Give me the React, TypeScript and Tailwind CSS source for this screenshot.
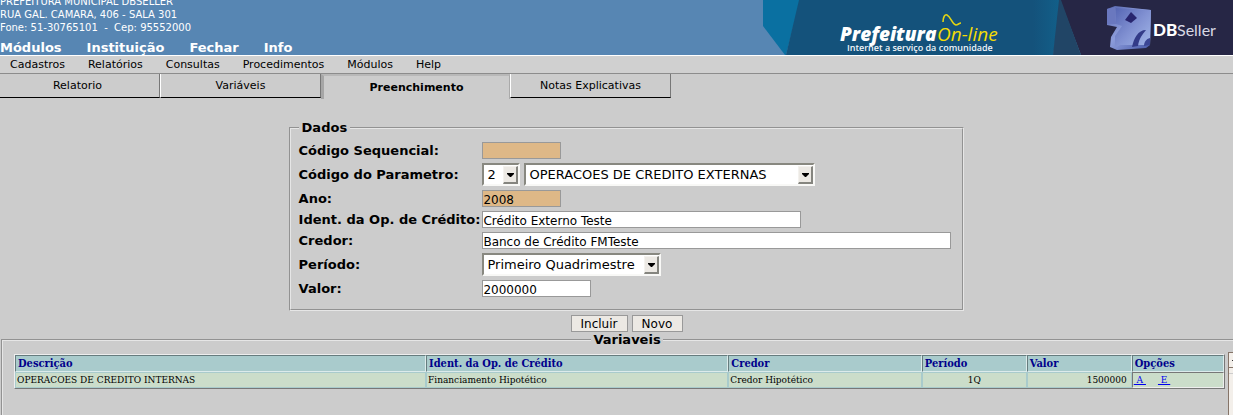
import type { ReactNode } from "react";

const mainMenu = ["Módulos", "Instituição", "Fechar", "Info"];
const subMenu = ["Cadastros", "Relatórios", "Consultas", "Procedimentos", "Módulos", "Help"];

function Banner() {
  return (
    <svg className="block h-[55px] w-[470px] shrink-0" viewBox="0 0 470 55" role="img" aria-label="Prefeitura On-line - DBSeller">
      <defs>
        <linearGradient id="cube" x1="0" y1="0" x2="1" y2="1">
          <stop offset="0" stopColor="#5362ac" />
          <stop offset="0.45" stopColor="#8d9ddb" />
          <stop offset="1" stopColor="#4658a8" />
        </linearGradient>
        <linearGradient id="face" x1="0" y1="0" x2="1" y2="1">
          <stop offset="0" stopColor="#5666b4" />
          <stop offset="0.5" stopColor="#8191d2" />
          <stop offset="1" stopColor="#a4b9ea" />
        </linearGradient>
        <linearGradient id="teal" x1="0" y1="0" x2="1" y2="0">
          <stop offset="0" stopColor="#14527b" />
          <stop offset="1" stopColor="#12608a" />
        </linearGradient>
      </defs>
      <path d="M0 0H37L23 55H22L0 26Z" fill="#0a70a1" />
      <path d="M36 0H298L290 55H23Z" fill="#14527b" />
      <path d="M270 0H298L290 55H270Z" fill="url(#teal)" />
      <path d="M297 0H470V55H318Z" fill="#262645" />
      <path d="M298 0L318 55H290L296 0Z" fill="#214566" />
      <path d="M344 9L352 6L388 10L387 45L383 48L354 50L347 47L348 37L354 27L344 25Z" fill="url(#cube)" />
      <path d="M353 8L388 10L387 45H357L352 48L352 36L359 26L353 24Z" fill="url(#face)" />
      <path d="M344 9L352 7L353 24H344Z" fill="#6a78bf" />
      <path d="M368 12L374 18L368 23L362 20Z" fill="#28256e" />
      <path d="M369 47C371 38 375 30 383 30C380 34 376 38 375 46Z" fill="#333b88" />
      <path d="M381 46C381 42 383 39 387 38V45Z" fill="#3b4694" />
      <text x="77" y="41" fill="#fff" fontFamily="Open Sans" fontSize="19" fontWeight="800" fontStyle="italic">Prefeitura</text>
      <text x="174" y="41" fill="#f5dc05" fontFamily="Open Sans" fontSize="19" fontStyle="italic">On-line</text>
      <path d="M180 22C180 17 182 14 184 15C188 17 189 24 193 25C195 25 196 23 198 23" fill="none" stroke="#e3d413" strokeWidth="1.6" />
      <text x="84" y="51" fill="#f0f5f9" fontFamily="Open Sans" fontSize="9" fontWeight="600">Internet a serviço da comunidade</text>
      <text x="390" y="36" fill="#fff" fontFamily="Lato" fontSize="17" fontWeight="900">DB</text>
      <text x="414" y="36" fill="#d8d8e4" fontFamily="Lato" fontSize="16" fontWeight="400">Seller</text>
    </svg>
  );
}

function Field({ id, label, children }: { id: string; label: string; children: ReactNode }) {
  return (
    <>
      <label htmlFor={id} className="flex items-center text-[13px] leading-4 font-bold whitespace-nowrap">
        {label}
      </label>
      <div className="flex gap-1">{children}</div>
    </>
  );
}

function TextBox({ id, value, className }: { id: string; value: string; className: string }) {
  return (
    <input
      id={id}
      defaultValue={value}
      className={`h-[17px] border border-[#999] pt-0.5 text-[12px] leading-[13px] ${className}`}
    />
  );
}

function Combo({ id, label, value, className }: { id: string; label?: string; value: string; className: string }) {
  return (
    <div className={`relative ${className}`}>
      <select
        id={id}
        aria-label={label}
        className="block h-[23px] w-full appearance-none border-2 border-t-[#888880] border-r-[#f8f8f6] border-b-[#f8f8f6] border-l-[#888880] bg-white pl-[3px] text-[13px] leading-4"
      >
        <option>{value}</option>
      </select>
      <span className="pointer-events-none absolute top-[3px] right-[2px] flex h-[18px] w-[15px] items-center justify-center border border-t-[#f4f2ee] border-r-2 border-r-[#85857f] border-b-2 border-b-[#85857f] border-l-[#f4f2ee] bg-[#ece9e4]">
        <svg className="h-1 w-[7px]" viewBox="0 0 7 4">
          <path d="M0 0H7V1L4 4H3L0 1Z" fill="#000" />
        </svg>
      </span>
    </div>
  );
}

const th = "h-[17px] border border-t-[#667c7e] border-l-[#667c7e] border-r-[#dcebeb] border-b-[#dcebeb] bg-[#a9cbcc] px-0.5 text-left";
const td = "h-4 border border-[#a9cbcc] bg-[#cbddca] px-px";

export default function App() {
  return (
    <div className="flex min-h-screen flex-col overflow-hidden bg-[#ccc] font-['DejaVu_Sans',sans-serif] text-black">
      <header className="flex h-[55px] justify-between bg-[#5786b3] text-white">
        <div className="flex flex-col justify-end">
          <address className="text-[10px] leading-[13px] whitespace-pre not-italic">
            <div>PREFEITURA MUNICIPAL DBSELLER</div>
            <div>RUA GAL. CAMARA, 406 - SALA 301</div>
            <div>{"Fone: 51-30765101  -  Cep: 95552000"}</div>
          </address>
          <nav className="mt-[7px] flex gap-[25px] text-[13px] leading-[14px] font-bold">
            {mainMenu.map((item) => (
              <a key={item} href="#">{item}</a>
            ))}
          </nav>
        </div>
        <Banner />
      </header>

      <nav className="flex h-[19px] gap-[23px] border-t border-b border-t-white border-b-[#8c8c8c] bg-[#d0d0d0] px-2.5 text-[11px] leading-[17px]">
        {subMenu.map((item) => (
          <a key={item} href="#">{item}</a>
        ))}
      </nav>

      <div className="flex h-[25px] text-[11px]" role="tablist">
        <button role="tab" className="h-6 w-40 border-r border-b border-r-[#777] border-b-black pt-0.5 pr-1">Relatorio</button>
        <button role="tab" className="h-6 w-[161px] border-r border-b border-l border-r-[#777] border-b-black border-l-white pt-0.5">Variáveis</button>
        <button role="tab" aria-selected="true" className="w-[189px] border-t-2 border-r border-l-3 border-t-[#b8b8b8] border-r-[#aaa] border-l-[#a6a6a6] pt-0.5 font-bold">Preenchimento</button>
        <button role="tab" className="h-6 w-[161px] border-r border-b border-l border-r-[#777] border-b-black border-l-white pt-0.5">Notas Explicativas</button>
      </div>

      <form className="mt-[21px] -mr-5 flex flex-col items-center" onSubmit={(e) => e.preventDefault()}>
        <fieldset className="border-2 border-[#e6e6e6] pr-[11px] pb-3 pl-2 [border-style:groove]">
          <legend className="px-[3px] text-[13px] leading-4 font-bold">Dados</legend>
          <div className="mt-1.5 grid grid-cols-[auto_auto] gap-x-0.5 gap-y-1">
            <Field id="codigo" label="Código Sequencial:">
              <TextBox id="codigo" value="" className="w-[79px] bg-[#deb887]" />
            </Field>
            <Field id="parametro" label="Código do Parametro:">
              <Combo id="parametro" value="2" className="w-[38px]" />
              <Combo id="descricao" label="Descrição do Parametro" value="OPERACOES DE CREDITO EXTERNAS" className="w-[291px]" />
            </Field>
            <Field id="ano" label="Ano:">
              <TextBox id="ano" value="2008" className="w-[79px] bg-[#deb887]" />
            </Field>
            <Field id="ident" label="Ident. da Op. de Crédito:">
              <TextBox id="ident" value="Crédito Externo Teste" className="w-[319px] bg-white" />
            </Field>
            <Field id="credor" label="Credor:">
              <TextBox id="credor" value="Banco de Crédito FMTeste" className="w-[469px] bg-white" />
            </Field>
            <Field id="periodo" label="Período:">
              <Combo id="periodo" value="Primeiro Quadrimestre" className="w-[179px]" />
            </Field>
            <Field id="valor" label="Valor:">
              <TextBox id="valor" value="2000000" className="w-[109px] bg-white" />
            </Field>
          </div>
        </fieldset>
        <div className="mt-1 flex gap-1 text-[12px] leading-[13px]">
          <button type="submit" className="h-[17px] w-[57px] border border-[#999] bg-[#ece9e4] pt-0.5">Incluir</button>
          <button type="button" className="h-[17px] w-[51px] border border-[#999] bg-[#ece9e4] pt-0.5">Novo</button>
        </div>
      </form>

      <fieldset className="-mr-5 ml-px min-w-0 flex-1 border-2 border-b-0 border-[#e6e6e6] [border-style:groove] [border-bottom-style:none]">
        <legend className="mx-auto px-0.5 text-[13px] leading-4 font-bold">Variaveis</legend>
        <div className="flex gap-[3px] pr-[18px] pl-[11px]">
          <div className="min-w-0 flex-1 pt-1.5">
            <table className="w-full table-fixed border-separate border-spacing-0 border border-t-[#eee] border-r-[#777] border-b-[#777] border-l-[#eee] font-['DejaVu_Serif_Condensed','DejaVu_Serif',serif] text-[10px] leading-[14px]">
              <colgroup>
                <col className="w-[34%]" />
                <col className="w-[25%]" />
                <col className="w-[16%]" />
                <col className="w-[105px]" />
                <col className="w-[105px]" />
                <col />
              </colgroup>
              <thead className="text-[11px] text-[#00008b]">
                <tr>
                  <th className={th}>Descrição</th>
                  <th className={th}>Ident. da Op. de Crédito</th>
                  <th className={th}>Credor</th>
                  <th className={th}>Período</th>
                  <th className={th}>Valor</th>
                  <th className={th}>Opções</th>
                </tr>
              </thead>
              <tbody>
                <tr>
                  <td className={td}>OPERACOES DE CREDITO INTERNAS</td>
                  <td className={td}>Financiamento Hipotético</td>
                  <td className={td}>Credor Hipotético</td>
                  <td className={`${td} text-center`}>1Q</td>
                  <td className={`${td} pr-1 text-right`}>1500000</td>
                  <td className="h-4 border border-t-[#777] border-r-[#eee] border-b-[#eee] border-l-[#777] bg-[#cbddca] px-px whitespace-pre text-[#0000ee]">
                    <span className="flex gap-3">
                      <a href="#" className="underline">{" A "}</a>
                      <a href="#" className="underline">{" E "}</a>
                    </span>
                  </td>
                </tr>
              </tbody>
            </table>
          </div>
          <div className="mt-1 h-[68px] w-[5px] border-t border-l border-[#857468] bg-[#f3efea]">
            <div className="flex h-[15px] items-center justify-end border-b border-[#857468]">
              <span className="h-px w-px bg-[#333]" />
            </div>
            <div className="h-[6px] border-b border-[#ccc]" />
          </div>
        </div>
      </fieldset>
    </div>
  );
}
